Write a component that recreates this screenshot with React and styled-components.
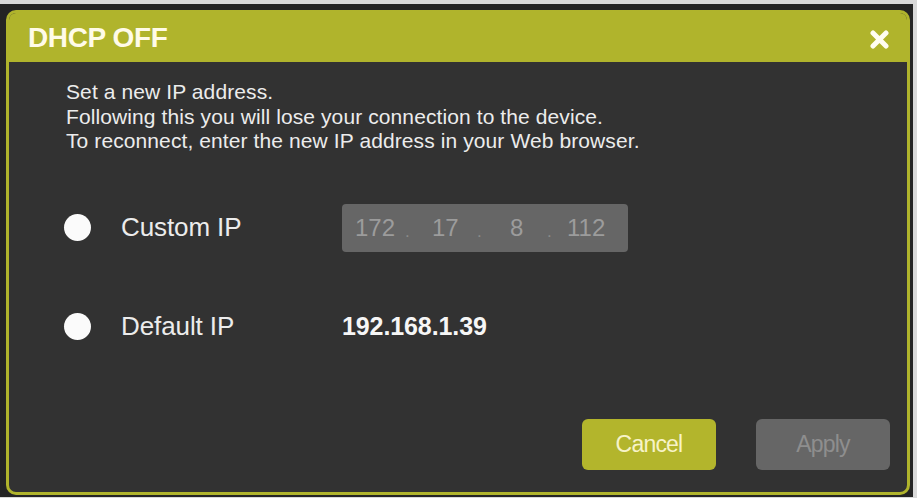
import React from "react";
import styled, { createGlobalStyle } from "styled-components";

const Global = createGlobalStyle`
  html, body { margin: 0; padding: 0; background: #d9d9d9; }
  body { font-family: "Liberation Sans", Arial, sans-serif; }
  * { box-sizing: border-box; }
`;

const OLIVE = "#b0b42c";

const Frame = styled.div`
  margin-top: 4px;
  width: 913px;
  height: 493px;
  background: #242424;
  padding: 6px 3px 2px 6px;
`;

const Dialog = styled.div`
  width: 904px;
  height: 485px;
  border: 3px solid ${OLIVE};
  border-radius: 10px;
  background: #323232;
  display: flex;
  flex-direction: column;
  overflow: hidden;
`;

const Header = styled.div`
  height: 49px;
  flex: none;
  background: ${OLIVE};
  display: flex;
  align-items: center;
  justify-content: space-between;
  padding: 0 18px 0 19px;
`;

const Title = styled.h1`
  margin: 0;
  font-size: 28px;
  font-weight: 700;
  color: #fffbe8;
  letter-spacing: -0.4px;
`;

const Close = styled.button`
  border: 0;
  background: none;
  padding: 0;
  width: 19px;
  height: 19px;
  display: flex;
  margin-top: 4px;
`;

const Body = styled.div`
  flex: 1;
  display: flex;
  flex-direction: column;
  padding: 18px 17px 22px 55px;
`;

const Intro = styled.p`
  margin: 0 0 50px 2px;
  font-size: 21px;
  line-height: 24.5px;
  color: #ececec;
  letter-spacing: 0.1px;
`;

const Options = styled.div`
  display: grid;
  grid-template-columns: 27px 191px auto;
  grid-auto-rows: 48px;
  column-gap: 30px;
  row-gap: 51px;
  align-items: center;
`;

const Radio = styled.span`
  width: 27px;
  height: 27px;
  border-radius: 50%;
  background: #fbfbfb;
`;

const Label = styled.span`
  font-size: 26px;
  color: #ececec;
  letter-spacing: -0.1px;
`;

const IpBox = styled.div`
  width: 286px;
  height: 48px;
  background: #666666;
  border-radius: 4px;
  display: flex;
  align-items: center;
  font-size: 24px;
  color: #9c9c9c;
  padding-left: 13px;
`;

const Octet = styled.span`
  width: ${(p) => p.$w}px;
  flex: none;
`;

const Dot = styled.span`
  width: ${(p) => p.$w}px;
  flex: none;
  font-size: 17px;
  color: #8a8a8a;
  padding-top: 8px;
`;

const Value = styled.span`
  font-size: 25px;
  font-weight: 700;
  color: #f6f6f6;
  letter-spacing: -0.1px;
`;

const Footer = styled.div`
  margin-top: auto;
  display: flex;
  justify-content: flex-end;
  gap: 40px;
`;

const Button = styled.button`
  width: 134px;
  height: 51px;
  border: 0;
  border-radius: 6px;
  font-family: "Liberation Sans", Arial, sans-serif;
  font-size: 23px;
  letter-spacing: -0.8px;
  background: ${(p) => (p.$primary ? "#b3b52c" : "#666666")};
  color: ${(p) => (p.$primary ? "#f7f3c8" : "#8e8e8e")};
`;

export default function App() {
  return (
    <>
      <Global />
      <Frame>
        <Dialog>
          <Header>
            <Title>DHCP OFF</Title>
            <Close aria-label="Close">
              <svg width="19" height="19" viewBox="0 0 19 19">
                <path
                  d="M3 3 L16 16 M16 3 L3 16"
                  stroke="#fffdf0"
                  strokeWidth="5"
                  strokeLinecap="round"
                />
              </svg>
            </Close>
          </Header>
          <Body>
            <Intro>
              Set a new IP address.
              <br />
              Following this you will lose your connection to the device.
              <br />
              To reconnect, enter the new IP address in your Web browser.
            </Intro>
            <Options>
              <Radio />
              <Label>Custom IP</Label>
              <IpBox>
                <Octet $w={50}>172</Octet>
                <Dot $w={27}>.</Dot>
                <Octet $w={45}>17</Octet>
                <Dot $w={33}>.</Dot>
                <Octet $w={37}>8</Octet>
                <Dot $w={20}>.</Dot>
                <Octet $w={40}>112</Octet>
              </IpBox>
              <Radio />
              <Label>Default IP</Label>
              <Value>192.168.1.39</Value>
            </Options>
            <Footer>
              <Button $primary>Cancel</Button>
              <Button>Apply</Button>
            </Footer>
          </Body>
        </Dialog>
      </Frame>
    </>
  );
}
